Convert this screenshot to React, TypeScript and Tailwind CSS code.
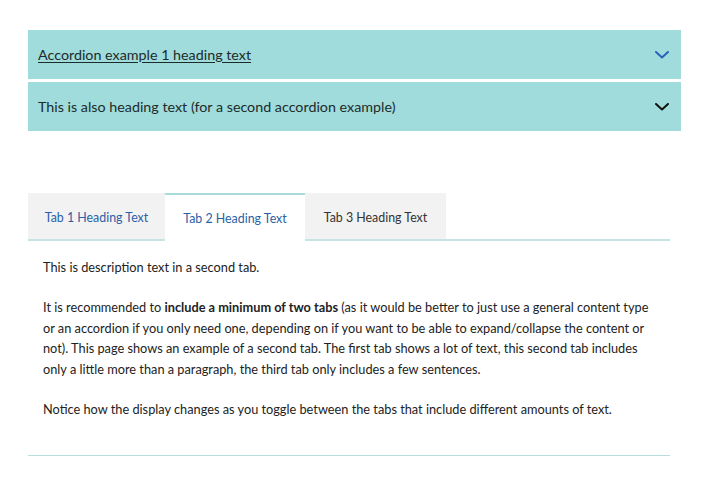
const FONT = "font-['Lato','Noto_Sans',sans-serif]"

function Chevron({ className }: { className: string }) {
  return (
    <svg className={className} width="14" height="8" viewBox="0 0 14 8" fill="none">
      <polyline points="1,1 7,6.5 13,1" stroke="currentColor" strokeWidth="2" strokeLinecap="round" strokeLinejoin="round" />
    </svg>
  )
}

function AccordionRow({ title, underline, iconClass }: { title: string; underline?: boolean; iconClass: string }) {
  return (
    <div className="flex h-[49px] items-center justify-between bg-[#9fdcdb] pl-[10px] pr-[12px]">
      <span className={`text-[14.3px] text-[#1d2b2b] ${underline ? 'underline underline-offset-2' : ''}`}>{title}</span>
      <Chevron className={iconClass} />
    </div>
  )
}

export default function App() {
  return (
    <div className={`${FONT} min-h-[480px] w-[720px] bg-white pt-[30px] pl-[28px]`}>
      <div className="flex w-[653px] flex-col gap-[3px]">
        <AccordionRow title="Accordion example 1 heading text" underline iconClass="text-[#2a62b8]" />
        <AccordionRow title="This is also heading text (for a second accordion example)" iconClass="text-[#111]" />
      </div>

      <div className="mt-[62px] w-[642px]">
        <div className="flex border-b-2 border-[#c6e4e1] text-[12.4px]">
          <div className="flex h-[46px] w-[137px] items-center justify-center bg-[#f2f2f2] pt-[4px] text-[#2b5fa5]">Tab 1 Heading Text</div>
          <div className="-mb-[2px] flex h-[48px] w-[140px] items-center justify-center border-t-2 border-[#a8dcdc] bg-white pt-[2px] text-[#2b5fa5]">Tab 2 Heading Text</div>
          <div className="flex h-[46px] w-[141px] items-center justify-center bg-[#f2f2f2] pt-[4px] text-[#333]">Tab 3 Heading Text</div>
        </div>
        <div className="border-b border-[#b6dedd] px-[15px] pt-[16px] pb-[36px] text-[12.75px] leading-[20.4px] text-[#222]">
          <p>This is description text in a second tab.</p>
          <p className="mt-[20px]">
            It is recommended to <strong className="font-bold">include a minimum of two tabs</strong> (as it would be better to just use a general content type or an accordion if you only need one, depending on if you want to be able to expand/collapse the content or not). This page shows an example of a second tab. The first tab shows a lot of text, this second tab includes only a little more than a paragraph, the third tab only includes a few sentences.
          </p>
          <p className="mt-[20px]">Notice how the display changes as you toggle between the tabs that include different amounts of text.</p>
        </div>
      </div>
    </div>
  )
}
